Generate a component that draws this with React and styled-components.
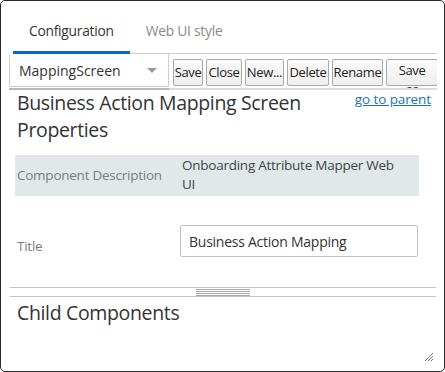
import React from "react";
import styled, { createGlobalStyle } from "styled-components";

const Global = createGlobalStyle`
  html, body { margin: 0; padding: 0; background: #fff; }
  body { font-family: "Open Sans", "Noto Sans", sans-serif; }
  * { box-sizing: border-box; }
`;

const Window = styled.div`
  width: 445px;
  height: 372px;
  border: 1px solid #2b2b2b;
  border-radius: 5px;
  overflow: hidden;
  position: relative;
  display: flex;
  flex-direction: column;
  background: #fff;
`;

const Tabs = styled.div`
  display: flex;
  margin: 0 7px 0 12px;
  border-bottom: 1px solid #cfcfcf;
  height: 53px;
  padding-top: 9px;
`;

const Tab = styled.div`
  padding: 0 16px;
  display: flex;
  align-items: center;
  font-size: 13.8px;
  color: ${(p) => (p.$active ? "#333" : "#8a8a8a")};
  border-bottom: 3px solid ${(p) => (p.$active ? "#0a6cb4" : "transparent")};
  margin-bottom: -1px;
  letter-spacing: -0.25px;
`;

const ToolbarWrap = styled.div`
  margin: 0 7px 0 8px;
  height: 36px;
  overflow: hidden;
  position: relative;
`;

const Toolbar = styled.div`
  display: flex;
  align-items: flex-start;
  gap: 3px;
  height: 34px;
`;

const Select = styled.div`
  width: 160px;
  height: 33px;
  border: 1px solid #cfcfcf;
  border-top: none;
  display: flex;
  align-items: center;
  justify-content: space-between;
  padding: 0 9px 0 9px;
  font-size: 14px;
  color: #333;
  flex: none;
  margin-right: 1px;
`;

const Caret = styled.span`
  width: 0;
  height: 0;
  border-left: 5px solid transparent;
  border-right: 5px solid transparent;
  border-top: 5px solid #999;
  margin-right: 2px;
`;

const Button = styled.div`
  margin-top: 5px;
  height: 27px;
  border: 1px solid #a8a8a8;
  border-radius: 2px;
  background: linear-gradient(#fbfbfb, #eeeeee);
  font-size: 13px;
  color: #222;
  display: flex;
  flex-direction: column;
  align-items: center;
  justify-content: ${(p) => (p.$wrap ? "flex-start" : "center")};
  width: ${(p) => p.$w}px;
  flex: none;
  line-height: 19px;
  padding-top: ${(p) => (p.$wrap ? "1px" : "0")};
  overflow: visible;
  text-align: center;
  white-space: nowrap;
  letter-spacing: -0.35px;
`;

const Scrollbar = styled.div`
  position: absolute;
  left: 0;
  right: 0;
  bottom: 0;
  height: 2px;
  background: #dcdcdc;
`;

const Thumb = styled.div`
  width: 160px;
  height: 2px;
  background: #b8b8b8;
`;

const Content = styled.div`
  padding: 0 8px 0 14px;
  flex: 1;
  display: flex;
  flex-direction: column;
`;

const HeaderRow = styled.div`
  display: flex;
  justify-content: space-between;
  align-items: flex-start;
`;

const Heading = styled.div`
  font-size: 19.5px;
  line-height: 27px;
  color: #333;
  padding-left: 2px;
  margin-top: -1px;
  width: 320px;
  letter-spacing: -0.35px;
  font-weight: 400;
`;

const Link = styled.a`
  font-size: 13.5px;
  color: #1a72c4;
  text-decoration: underline;
  margin-top: 0px;
  margin-right: 5px;
  line-height: 18px;
  letter-spacing: -0.1px;
`;

const PropRow = styled.div`
  display: grid;
  grid-template-columns: 164px 1fr;
  align-items: center;
  width: 404px;
  background: ${(p) => (p.$shaded ? "#e0e8ea" : "transparent")};
  margin-top: ${(p) => p.$mt}px;
  min-height: ${(p) => p.$h}px;
`;

const Label = styled.div`
  font-size: 13.5px;
  color: #7a7f7a;
  padding-left: 2px;
  letter-spacing: -0.25px;
  align-self: ${(p) => (p.$low ? "end" : "center")};
  padding-bottom: ${(p) => (p.$low ? "2px" : "0")};
  margin-top: ${(p) => (p.$low ? "0" : "-2px")};
`;

const Value = styled.div`
  font-size: 13.5px;
  line-height: 19px;
  color: #444;
  padding: 1px 20px 2px 3px;
  letter-spacing: -0.25px;
`;

const Input = styled.div`
  height: 32px;
  border: 1px solid #c2c2c2;
  border-radius: 2px;
  display: flex;
  align-items: center;
  padding: 0 8px;
  font-size: 14px;
  color: #333;
  margin-left: 1px;
  margin-right: 1px;
  letter-spacing: -0.25px;
`;

const Splitter = styled.div`
  margin: 30px 0 0 -5px;
  height: 10px;
  border-top: 1px solid #c4c4c4;
  border-bottom: 1px solid #c4c4c4;
  display: flex;
  justify-content: center;
  align-items: center;
`;

const Grip = styled.div`
  width: 54px;
  height: 7px;
  background: repeating-linear-gradient(#a8a8a8 0 1px, transparent 1px 2px);
`;

const SubHeading = styled.div`
  font-size: 19.5px;
  line-height: 27px;
  color: #333;
  padding-left: 2px;
  margin-top: 2px;
  letter-spacing: -0.35px;
`;

const ResizeGrip = styled.svg`
  position: absolute;
  right: 10px;
  bottom: 9px;
`;

export default function App() {
  return (
    <>
      <Global />
      <Window>
        <Tabs>
          <Tab $active>Configuration</Tab>
          <Tab>Web UI style</Tab>
        </Tabs>
        <ToolbarWrap>
          <Toolbar>
            <Select>
              MappingScreen
              <Caret />
            </Select>
            <Button $w={30}>Save</Button>
            <Button $w={36}>Close</Button>
            <Button $w={39}>New...</Button>
            <Button $w={42}>Delete</Button>
            <Button $w={51}>Rename</Button>
            <Button $w={52} $wrap>
              <span>Save</span>
              <span>as</span>
            </Button>
          </Toolbar>
          <Scrollbar>
            <Thumb />
          </Scrollbar>
        </ToolbarWrap>
        <Content>
          <HeaderRow>
            <Heading>Business Action Mapping Screen Properties</Heading>
            <Link href="#">go to parent</Link>
          </HeaderRow>
          <PropRow $shaded $mt={12} $h={41}>
            <Label>Component Description</Label>
            <Value>Onboarding Attribute Mapper Web UI</Value>
          </PropRow>
          <PropRow $mt={29} $h={32}>
            <Label $low>Title</Label>
            <Input>Business Action Mapping</Input>
          </PropRow>
          <Splitter>
            <Grip />
          </Splitter>
          <SubHeading>Child Components</SubHeading>
        </Content>
        <ResizeGrip width="10" height="10" viewBox="0 0 10 10">
          <path d="M9 1 L1 9 M9 4 L4 9 M9 7 L7 9" stroke="#777" strokeWidth="1" />
        </ResizeGrip>
      </Window>
    </>
  );
}
